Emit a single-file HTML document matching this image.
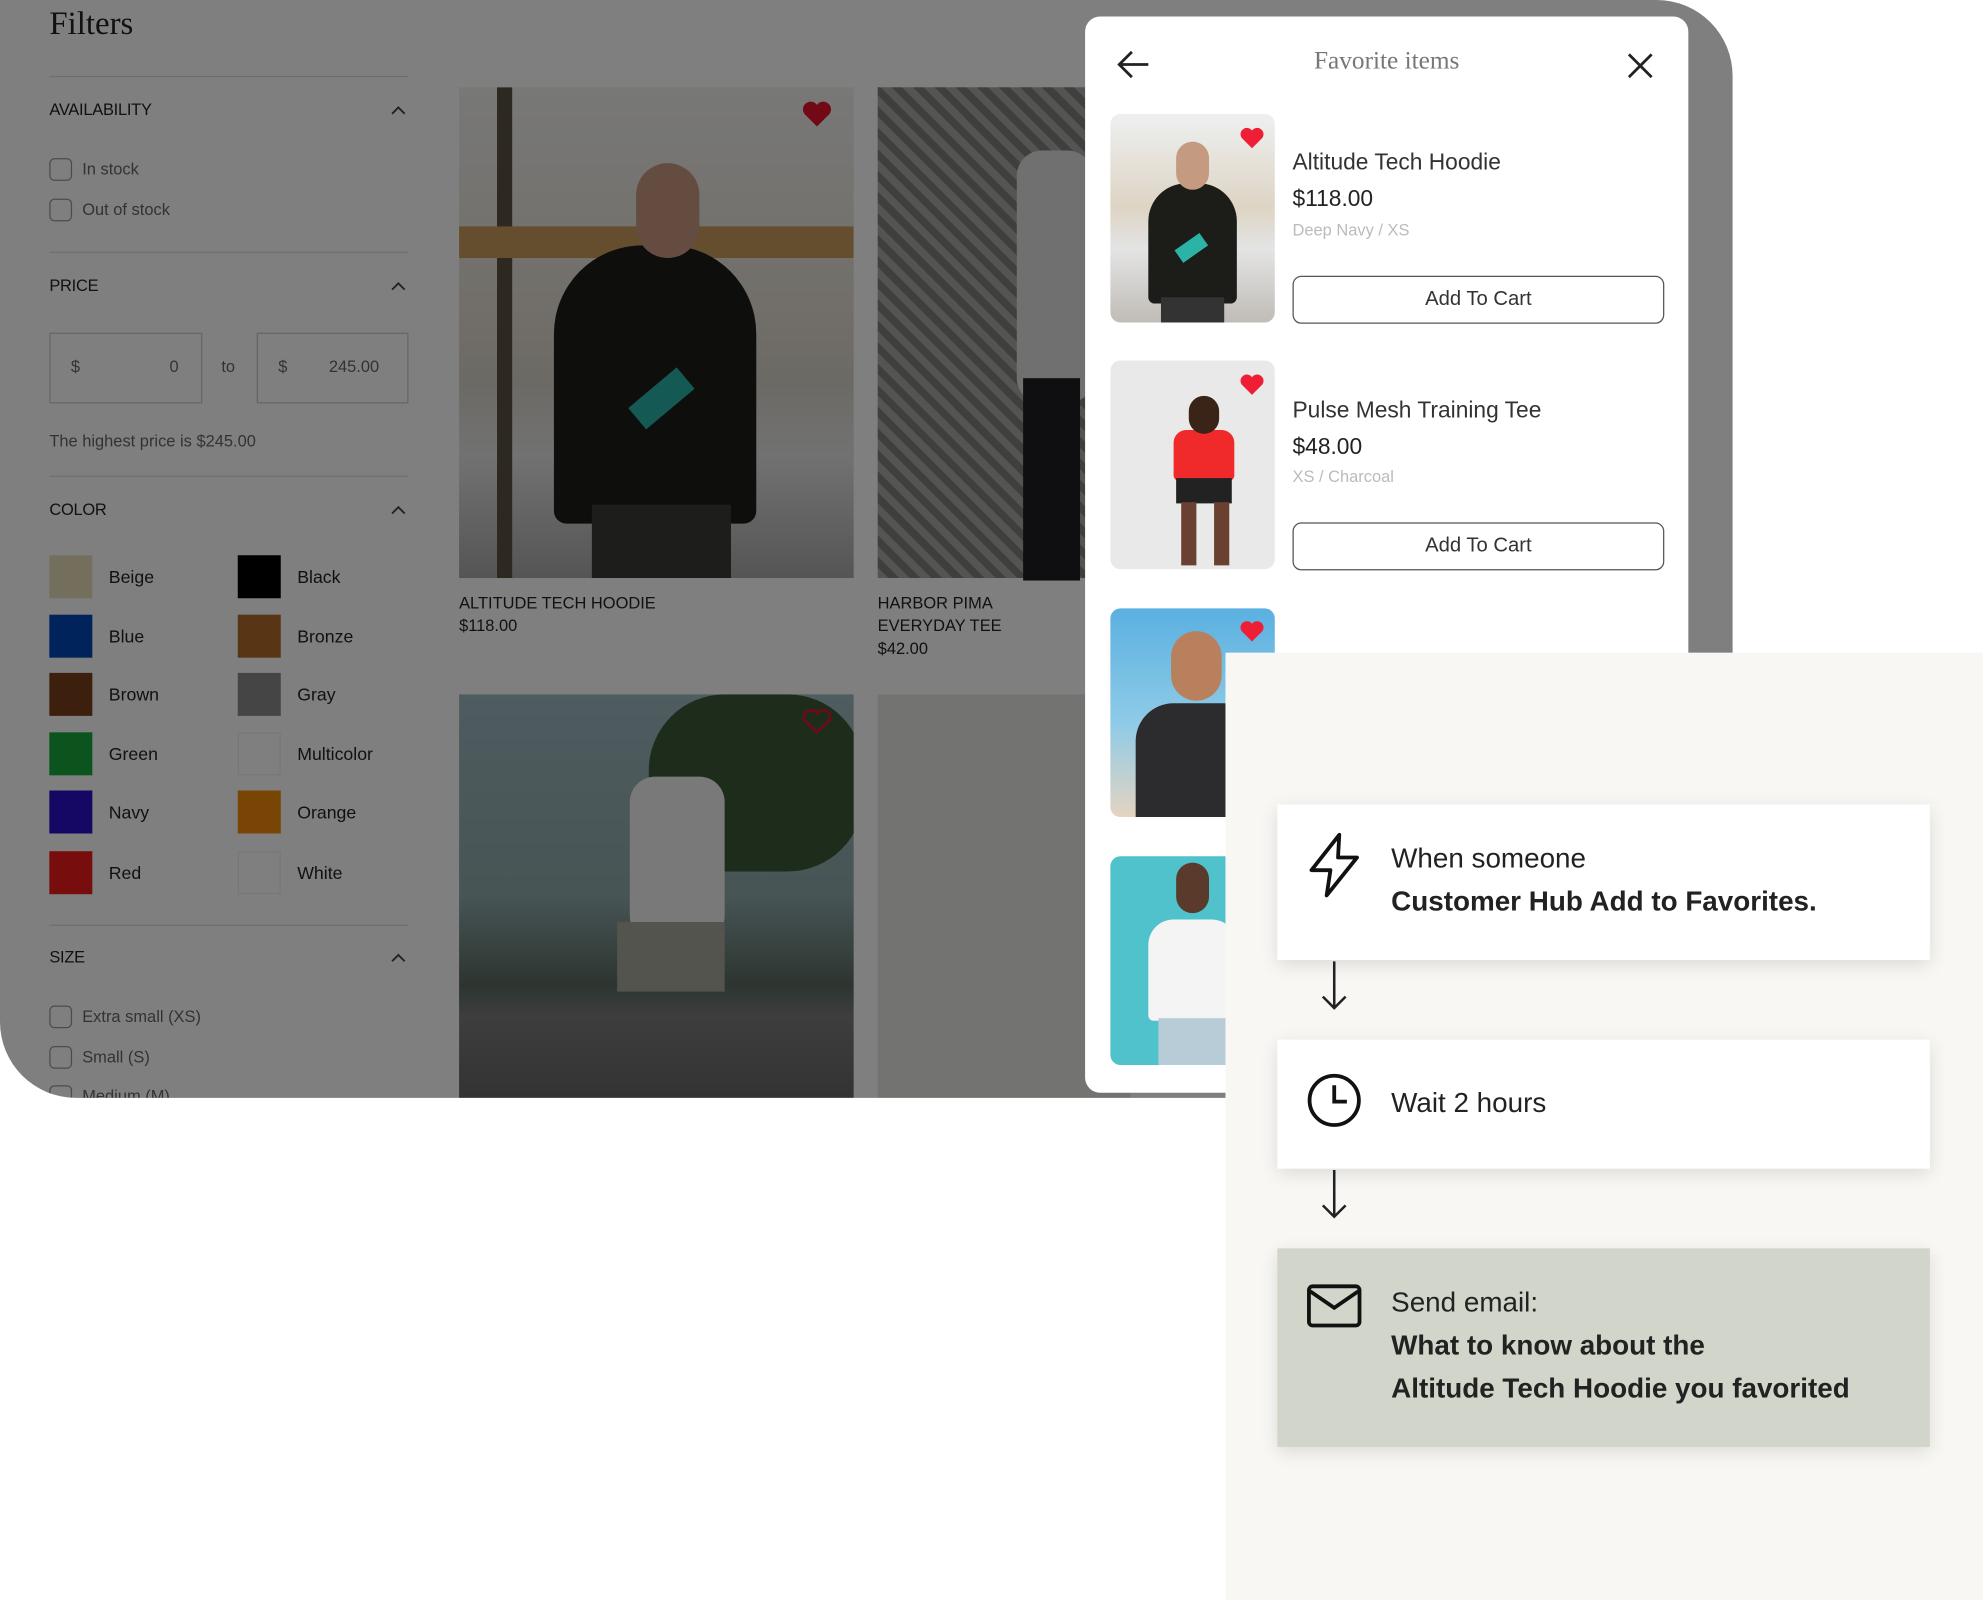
<!DOCTYPE html>
<html><head><meta charset="utf-8"><style>
*{box-sizing:border-box;margin:0;padding:0}
html,body{width:1983px;height:1600px;overflow:hidden;background:#fff}
#s{position:absolute;left:0;top:0;width:1568px;height:1265px;transform:scale(1.26467,1.2648);transform-origin:0 0;font-family:"Liberation Sans",sans-serif}
.a{position:absolute}
#gp{left:0;top:0;width:1370px;height:868px;background:#fff;border-radius:0 60px 0 60px;overflow:hidden}
.h{font-size:13px;color:#222;letter-spacing:-.2px}
.ln{height:1px;background:#ddd;width:284px;left:39px}
.cb{width:18px;height:18px;border:1.5px solid #999;border-radius:4px;left:39px}
.t{font-size:13px;color:#666}
.sw{width:34px;height:34px}
.sl{font-size:14px;color:#222}
.car{left:309px;width:12px;height:8px}
.cap{font-size:13px;color:#222;line-height:18px}
#ov{left:0;top:0;width:1370px;height:868px;background:rgba(0,0,0,.5)}
#m{left:858px;top:13px;width:477px;height:851px;background:#fff;border-radius:12px;overflow:hidden}
.pi{width:130px;height:165px;border-radius:8px;left:20px;overflow:hidden}
.nm{left:164px;font-size:18px;color:#333}
.pr{left:164px;font-size:18px;color:#222}
.vr{left:164px;font-size:13px;color:#bbb}
.bt{left:164px;width:294px;height:38px;border:1.5px solid #555;border-radius:7px;text-align:center;line-height:35px;font-size:16px;color:#333}
.hr{width:20px;height:18px}
#cr{left:969px;top:516px;width:599px;height:749px;background:#f8f7f4}
.cd{left:1010px;width:516px;background:#fff;box-shadow:0 4px 14px rgba(0,0,0,.12)}
.ft{left:1100px;font-size:22px;color:#222;line-height:34px}
</style></head><body><div id="s">
<div id="gp" class="a">
 <div class="a" style="left:39px;top:4px;font-family:'Liberation Serif',serif;font-size:26px;color:#222">Filters</div>
 <div class="a ln" style="top:60px"></div>
 <div class="a h" style="left:39px;top:79px">AVAILABILITY</div><svg class="a car" style="top:83px" viewBox="0 0 12 8"><path d="M1 7l5-5 5 5" fill="none" stroke="#444" stroke-width="1.5"/></svg>
 <div class="a cb" style="top:125px"></div><div class="a t" style="left:65px;top:126px">In stock</div>
 <div class="a cb" style="top:157px"></div><div class="a t" style="left:65px;top:158px">Out of stock</div>
 <div class="a ln" style="top:199px"></div>
 <div class="a h" style="left:39px;top:218px">PRICE</div><svg class="a car" style="top:222px" viewBox="0 0 12 8"><path d="M1 7l5-5 5 5" fill="none" stroke="#444" stroke-width="1.5"/></svg>
 <div class="a" style="left:39px;top:263px;width:121px;height:56px;border:1px solid #ccc"></div>
 <div class="a t" style="left:56px;top:282px">$</div><div class="a t" style="left:134px;top:282px">0</div>
 <div class="a t" style="left:175px;top:282px">to</div>
 <div class="a" style="left:203px;top:263px;width:120px;height:56px;border:1px solid #ccc"></div>
 <div class="a t" style="left:220px;top:282px">$</div><div class="a t" style="left:260px;top:282px">245.00</div>
 <div class="a t" style="left:39px;top:341px">The highest price is $245.00</div>
 <div class="a ln" style="top:376px"></div>
 <div class="a h" style="left:39px;top:395px">COLOR</div><svg class="a car" style="top:399px" viewBox="0 0 12 8"><path d="M1 7l5-5 5 5" fill="none" stroke="#444" stroke-width="1.5"/></svg>
 <div class="a sw" style="left:39px;top:439px;background:#e9dcba"></div><div class="a sl" style="left:86px;top:448px">Beige</div>
 <div class="a sw" style="left:188px;top:439px;background:#000"></div><div class="a sl" style="left:235px;top:448px">Black</div>
 <div class="a sw" style="left:39px;top:486px;background:#0046b8"></div><div class="a sl" style="left:86px;top:495px">Blue</div>
 <div class="a sw" style="left:188px;top:486px;background:#b06a2a"></div><div class="a sl" style="left:235px;top:495px">Bronze</div>
 <div class="a sw" style="left:39px;top:532px;background:#7a3e1a"></div><div class="a sl" style="left:86px;top:541px">Brown</div>
 <div class="a sw" style="left:188px;top:532px;background:#8a8a8a"></div><div class="a sl" style="left:235px;top:541px">Gray</div>
 <div class="a sw" style="left:39px;top:579px;background:#18a83a"></div><div class="a sl" style="left:86px;top:588px">Green</div>
 <div class="a sw" style="left:188px;top:579px;border:1px solid #eee"></div><div class="a sl" style="left:235px;top:588px">Multicolor</div>
 <div class="a sw" style="left:39px;top:625px;background:#2a10c8"></div><div class="a sl" style="left:86px;top:634px">Navy</div>
 <div class="a sw" style="left:188px;top:625px;background:#f08a0a"></div><div class="a sl" style="left:235px;top:634px">Orange</div>
 <div class="a sw" style="left:39px;top:673px;background:#f01a1a"></div><div class="a sl" style="left:86px;top:682px">Red</div>
 <div class="a sw" style="left:188px;top:673px;border:1px solid #eee"></div><div class="a sl" style="left:235px;top:682px">White</div>
 <div class="a ln" style="top:731px"></div>
 <div class="a h" style="left:39px;top:749px">SIZE</div><svg class="a car" style="top:753px" viewBox="0 0 12 8"><path d="M1 7l5-5 5 5" fill="none" stroke="#444" stroke-width="1.5"/></svg>
 <div class="a cb" style="top:795px"></div><div class="a t" style="left:65px;top:796px">Extra small (XS)</div>
 <div class="a cb" style="top:827px"></div><div class="a t" style="left:65px;top:828px">Small (S)</div>
 <div class="a cb" style="top:858px"></div><div class="a t" style="left:65px;top:859px">Medium (M)</div>
 <div class="a" style="left:363px;top:69px;width:312px;height:388px;overflow:hidden;background:linear-gradient(#f0f0ee 0%,#e4ded4 45%,#d9d4cb 60%,#e4e4e4 75%,#aaa 100%)">
  <div class="a" style="left:30px;top:0;width:12px;height:388px;background:#5a5040"></div>
  <div class="a" style="left:0;top:110px;width:312px;height:25px;background:#c89c5a"></div>
  <div class="a" style="left:75px;top:125px;width:160px;height:220px;border-radius:70px 70px 10px 10px;background:#1c1c18"></div>
  <div class="a" style="left:140px;top:60px;width:50px;height:75px;border-radius:25px;background:#c89a80"></div>
  <div class="a" style="left:105px;top:330px;width:110px;height:60px;background:#3a3a38"></div>
  <div class="a" style="left:135px;top:235px;width:50px;height:22px;background:#2bb3a8;transform:rotate(-40deg)"></div>
 </div>
 <div class="a" style="left:694px;top:69px;width:200px;height:388px;background:repeating-linear-gradient(45deg,#a8a8a4 0 6px,#7e7e7a 6px 12px)">
  <div class="a" style="left:110px;top:50px;width:60px;height:200px;background:#e0e0e0;border-radius:20px"></div>
  <div class="a" style="left:115px;top:230px;width:45px;height:160px;background:#1e1e22"></div>
 </div>
 <div class="a cap" style="left:363px;top:468px">ALTITUDE TECH HOODIE<br>$118.00</div>
 <div class="a cap" style="left:694px;top:468px">HARBOR PIMA<br>EVERYDAY TEE<br>$42.00</div>
 <div class="a" style="left:363px;top:549px;width:312px;height:319px;overflow:hidden;background:linear-gradient(#9fb8c0 0%,#8faaaa 50%,#5a6a62 72%,#7c7c7c 80%,#666 100%)">
  <div class="a" style="left:150px;top:0;width:170px;height:140px;border-radius:60px;background:#3c5a36"></div>
  <div class="a" style="left:135px;top:65px;width:75px;height:130px;background:#f2f2f2;border-radius:20px"></div>
  <div class="a" style="left:125px;top:180px;width:85px;height:55px;background:#a8a89c"></div>
 </div>
 <div class="a" style="left:694px;top:549px;width:200px;height:319px;background:#e6e6e4"></div>
 <svg class="a" style="left:634px;top:79px" width="24" height="22" viewBox="0 0 24 22"><path d="M12 21L2 11A5.5 5.5 0 0 1 12 4a5.5 5.5 0 0 1 10 7z" fill="#e5132c"/></svg>
 <svg class="a" style="left:634px;top:559px" width="24" height="22" viewBox="0 0 24 22"><path d="M12 20L2.5 11A5 5 0 0 1 12 5a5 5 0 0 1 9.5 6z" fill="none" stroke="#e5132c" stroke-width="2"/></svg>
</div>
<div id="ov" class="a" style="border-radius:0 60px 0 60px"></div>
<div id="m" class="a">
 <svg class="a" style="left:24px;top:26px" width="28" height="24" viewBox="0 0 28 24"><path d="M26 12H3M13 2L3 12l10 10" fill="none" stroke="#222" stroke-width="2.2"/></svg>
 <div class="a" style="left:0;width:477px;top:24px;text-align:center;font-family:'Liberation Serif',serif;font-size:20px;color:#777">Favorite items</div>
 <svg class="a" style="left:428px;top:28px" width="22" height="22" viewBox="0 0 22 22"><path d="M2 2l18 18M20 2L2 20" stroke="#222" stroke-width="2.2"/></svg>
 <div class="a pi" style="top:77px;background:linear-gradient(#eef0f0,#ddd4c4 45%,#e4e4e4 65%,#c0bcb6)">
  <div class="a" style="left:30px;top:55px;width:70px;height:95px;border-radius:30px 30px 5px 5px;background:#1c1c18"></div>
  <div class="a" style="left:52px;top:22px;width:26px;height:38px;border-radius:13px;background:#c49a80"></div>
  <div class="a" style="left:40px;top:145px;width:50px;height:20px;background:#333"></div>
  <div class="a" style="left:52px;top:100px;width:24px;height:12px;background:#2bb3a8;transform:rotate(-35deg)"></div>
 </div>
 <div class="a pi" style="top:272px;background:#e9e9e9">
  <div class="a" style="left:50px;top:55px;width:48px;height:40px;background:#f02a2a;border-radius:10px 10px 4px 4px"></div>
  <div class="a" style="left:62px;top:28px;width:24px;height:30px;border-radius:12px;background:#3a2418"></div>
  <div class="a" style="left:52px;top:93px;width:44px;height:20px;background:#222"></div>
  <div class="a" style="left:56px;top:112px;width:12px;height:50px;background:#6a4030"></div>
  <div class="a" style="left:82px;top:112px;width:12px;height:50px;background:#6a4030"></div>
 </div>
 <div class="a pi" style="top:468px;background:linear-gradient(#5ab0e0,#8fcbe8 55%,#e4d4c0)">
  <div class="a" style="left:20px;top:75px;width:100px;height:95px;background:#2c2c2e;border-radius:30px 30px 0 0"></div>
  <div class="a" style="left:48px;top:18px;width:40px;height:55px;border-radius:20px;background:#b8805c"></div>
 </div>
 <div class="a pi" style="top:664px;background:#4fc2cc">
  <div class="a" style="left:30px;top:50px;width:70px;height:80px;background:#f4f4f4;border-radius:20px 20px 4px 4px"></div>
  <div class="a" style="left:52px;top:5px;width:26px;height:40px;border-radius:13px;background:#5a3a2a"></div>
  <div class="a" style="left:38px;top:128px;width:54px;height:40px;background:#b8ccd8"></div>
 </div>
 <svg class="a hr" style="left:122px;top:87px" viewBox="0 0 24 22"><path d="M12 21L2 11A5.5 5.5 0 0 1 12 4a5.5 5.5 0 0 1 10 7z" fill="#ee1f35"/></svg>
 <svg class="a hr" style="left:122px;top:282px" viewBox="0 0 24 22"><path d="M12 21L2 11A5.5 5.5 0 0 1 12 4a5.5 5.5 0 0 1 10 7z" fill="#ee1f35"/></svg>
 <svg class="a hr" style="left:122px;top:477px" viewBox="0 0 24 22"><path d="M12 21L2 11A5.5 5.5 0 0 1 12 4a5.5 5.5 0 0 1 10 7z" fill="#ee1f35"/></svg>
 <div class="a nm" style="top:105px">Altitude Tech Hoodie</div>
 <div class="a pr" style="top:134px">$118.00</div>
 <div class="a vr" style="top:161px">Deep Navy / XS</div>
 <div class="a bt" style="top:205px">Add To Cart</div>
 <div class="a nm" style="top:301px">Pulse Mesh Training Tee</div>
 <div class="a pr" style="top:330px">$48.00</div>
 <div class="a vr" style="top:356px">XS / Charcoal</div>
 <div class="a bt" style="top:400px">Add To Cart</div>
</div>
<div id="cr" class="a"></div>
<div class="a cd" style="top:636px;height:123px"></div>
<svg class="a" style="left:1033px;top:658px" width="44" height="52" viewBox="0 0 44 52"><path d="M26 2L4 30h15l-3 20 24-30H25z" fill="none" stroke="#111" stroke-width="3" stroke-linejoin="round"/></svg>
<div class="a ft" style="top:662px">When someone</div>
<div class="a ft" style="top:696px;font-weight:bold">Customer Hub Add to Favorites.</div>
<svg class="a" style="left:1043px;top:760px" width="24" height="40" viewBox="0 0 24 40"><path d="M12 0v37M3 28l9 9 9-9" fill="none" stroke="#222" stroke-width="2"/></svg>
<div class="a cd" style="top:822px;height:102px"></div>
<svg class="a" style="left:1032px;top:847px" width="46" height="46" viewBox="0 0 46 46"><circle cx="23" cy="23" r="19.5" fill="none" stroke="#111" stroke-width="3"/><path d="M23 11v13h10" fill="none" stroke="#111" stroke-width="3"/></svg>
<div class="a ft" style="top:855px">Wait 2 hours</div>
<svg class="a" style="left:1043px;top:925px" width="24" height="40" viewBox="0 0 24 40"><path d="M12 0v37M3 28l9 9 9-9" fill="none" stroke="#222" stroke-width="2"/></svg>
<div class="a cd" style="top:987px;height:157px;background:#d2d6ca"></div>
<svg class="a" style="left:1033px;top:1015px" width="44" height="36" viewBox="0 0 44 36"><rect x="2" y="2" width="40" height="31" rx="3" fill="none" stroke="#111" stroke-width="3"/><path d="M3 6l19 13L41 6" fill="none" stroke="#111" stroke-width="3"/></svg>
<div class="a ft" style="top:1013px">Send email:</div>
<div class="a ft" style="top:1047px;font-weight:bold">What to know about the<br>Altitude Tech Hoodie you favorited</div>
</div></body></html>
